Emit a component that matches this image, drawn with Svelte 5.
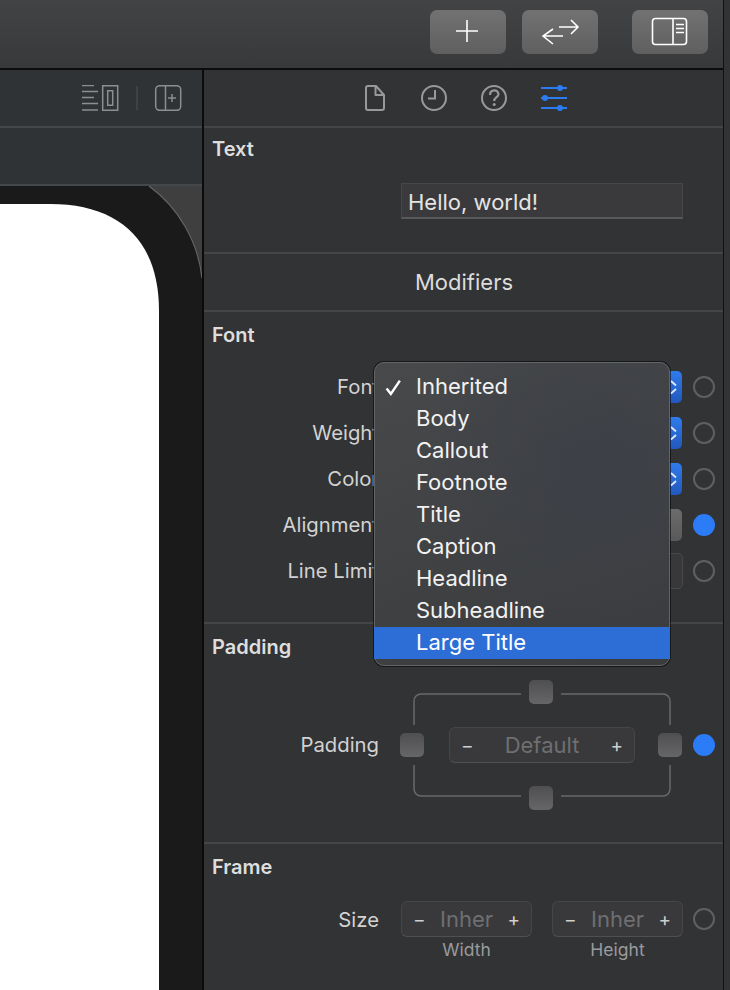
<script>
  const fontRows = [
    { label: 'Font', kind: 'popup' },
    { label: 'Weight', kind: 'popup' },
    { label: 'Color', kind: 'popup' },
    { label: 'Alignment', kind: 'segment', on: true },
    { label: 'Line Limit', kind: 'input' }
  ];
  const menu = ['Inherited', 'Body', 'Callout', 'Footnote', 'Title', 'Caption', 'Headline', 'Subheadline', 'Large Title'];
</script>

<div class="window">
  <header class="toolbar">
    <button class="tool">
      <svg width="76" height="44" viewBox="0 0 76 44"><path d="M37 10v22M26 21h22" fill="none" stroke="#fff" stroke-width="1.6" /></svg>
    </button>
    <button class="tool">
      <svg width="76" height="44" viewBox="0 0 76 44"><path d="M37 17h19M49 10l7 7-7 7M41 26H21M31 19l-10 7 10 8" fill="none" stroke="#fff" stroke-width="1.6" /></svg>
    </button>
    <button class="tool panel">
      <svg width="76" height="44" viewBox="0 0 76 44">
        <rect x="20.5" y="8.5" width="34" height="26" rx="3" fill="none" stroke="#fff" stroke-width="1.6" />
        <path d="M41 8v27M44 14.5h8M44 18.5h8M44 22.5h8" fill="none" stroke="#fff" stroke-width="1.6" />
      </svg>
    </button>
  </header>

  <div class="main">
    <section class="editor">
      <div class="bar bar-icons">
        <svg width="100" height="26" viewBox="0 0 100 26">
          <path d="M0 .5h12M0 6.500h16M0 12.500h12M0 18.500h16M0 25h16" fill="none" stroke="#8c8e90" stroke-width="1.5" />
          <path d="M20.700.7h15v24.600h-15zM25.700 5.700h5v14.600h-5z" fill="none" stroke="#8c8e90" stroke-width="1.5" />
          <path d="M55 1v24" stroke="#45484b" stroke-width="1.5" />
          <rect x="73.700" y=".7" width="25" height="24.600" rx="4" fill="none" stroke="#8c8e90" stroke-width="1.5" />
          <path d="M83.500 1v24M90 9v8M86 13h8" fill="none" stroke="#8c8e90" stroke-width="1.5" />
        </svg>
      </div>
      <div class="bar"></div>
      <svg class="canvas" width="202" height="804" viewBox="0 0 202 804">
        <rect width="202" height="804" fill="#3f3f3f" />
        <path d="M0 0H149A132 132 0 0 1 203 95V804H0Z" fill="#1a1a1a" />
        <path d="M149 0A132 132 0 0 1 202 92" fill="none" stroke="#666" stroke-width="1.2" />
        <path d="M0 18H50C120 18 159 55 159 125V804H0Z" fill="#fff" />
      </svg>
    </section>

    <aside class="inspector">
      <nav class="tabs">
        <svg width="20" height="26" viewBox="0 0 20 26">
          <path d="M3 1H11L19 10V23a2 2 0 0 1-2 2H3a2 2 0 0 1-2-2V3a2 2 0 0 1 2-2ZM10.500 1.500V10H19" fill="none" stroke="#98999b" stroke-width="2" stroke-linejoin="round" />
        </svg>
        <svg class="tab-clock" width="26" height="26" viewBox="0 0 26 26">
          <circle cx="13" cy="13" r="12" fill="none" stroke="#98999b" stroke-width="2" />
          <path d="M14 5v8.500H7" fill="none" stroke="#98999b" stroke-width="2" />
        </svg>
        <svg class="tab-help" width="26" height="26" viewBox="0 0 26 26">
          <circle cx="13" cy="13" r="12" fill="none" stroke="#98999b" stroke-width="2" />
          <path d="M9 10c0-6 8.500-6 8.500-.8 0 3-4.300 3-4.300 6.800" fill="none" stroke="#98999b" stroke-width="2.200" />
          <circle cx="13.200" cy="19.500" r="1.500" fill="#98999b" />
        </svg>
        <svg class="tab-attrs" width="26" height="26" viewBox="0 0 26 26">
          <path d="M0 3h26M0 13h26M0 23h26" stroke="#2b7cf0" stroke-width="2" />
          <circle cx="19" cy="3" r="3" fill="#2b7cf0" />
          <circle cx="4" cy="13" r="3" fill="#2b7cf0" />
          <circle cx="19" cy="23" r="3" fill="#2b7cf0" />
        </svg>
      </nav>

      <section class="group text-group">
        <h2>Text</h2>
        <div class="field">Hello, world!</div>
      </section>

      <section class="group modifiers">Modifiers</section>

      <section class="group font-group">
        <h2>Font</h2>
        {#each fontRows as row}
          <div class="row">
            <span class="label">{row.label}</span>
            <span class="control {row.kind}">
              {#if row.kind === 'popup'}
                <svg width="40" height="32" viewBox="0 0 40 32"><path d="M29 10l5 4.500M34 18l-5 4.500" fill="none" stroke="#dfe8fb" stroke-width="1.800" /></svg>
              {/if}
            </span>
            <span class="dot" class:on={row.on}></span>
          </div>
        {/each}
        <ul class="menu">
          {#each menu as item, i}
            <li class:active={i === menu.length - 1}>
              {#if i === 0}
                <svg class="check" width="17" height="17" viewBox="0 0 16 16"><path d="M1.500 9l4 5L14 1.500" fill="none" stroke="#fff" stroke-width="2.300" /></svg>
              {/if}
              {item}
            </li>
          {/each}
        </ul>
      </section>

      <section class="group padding-group">
        <h2>Padding</h2>
        <div class="row padding-row">
          <span class="label">Padding</span>
          <div class="padding-box">
            <svg class="bracket" width="258" height="104" viewBox="0 0 258 104">
              <path d="M108 1H8A7 7 0 0 0 1 8V32M148 1H250A7 7 0 0 1 257 8V32M1 72V96A7 7 0 0 0 8 103H108M257 72V96A7 7 0 0 1 250 103H148" fill="none" stroke="#68696b" stroke-width="1.500" />
            </svg>
            <span class="knob top"></span>
            <span class="knob left"></span>
            <div class="stepper wide"><i>−</i><b>Default</b><i>+</i></div>
            <span class="knob right"></span>
            <span class="knob bottom"></span>
          </div>
          <span class="dot on"></span>
        </div>
      </section>

      <section class="group frame-group">
        <h2>Frame</h2>
        <div class="row size-row">
          <span class="label">Size</span>
          <div class="sizes">
            <div class="size">
              <div class="stepper"><i>−</i><b>Inher</b><i>+</i></div>
              <small>Width</small>
            </div>
            <div class="size">
              <div class="stepper"><i>−</i><b>Inher</b><i>+</i></div>
              <small>Height</small>
            </div>
          </div>
          <span class="dot"></span>
        </div>
      </section>
    </aside>
  </div>
</div>

<style>
  :global(body) {
    margin: 0;
    background: #323335;
  }
  .window {
    width: 723px;
    height: 990px;
    overflow: hidden;
    border-right: 1px solid #111;
    font-family: Inter, "Liberation Sans", sans-serif;
    font-size: 20.300px;
    color: #dcdcdc;
  }
  .toolbar {
    box-sizing: border-box;
    height: 70px;
    padding: 10px 15px 0 0;
    display: flex;
    justify-content: flex-end;
    gap: 16px;
    background: linear-gradient(#424345, #38393b);
    border-bottom: 2px solid #0c0c0c;
  }
  .tool {
    width: 76px;
    height: 44px;
    padding: 0;
    border: 0;
    border-radius: 7px;
    background: linear-gradient(#727273, #5f5f60);
  }
  .tool svg {
    display: block;
  }
  .tool.panel {
    margin-left: 18px;
  }
  .main {
    display: flex;
    height: 920px;
  }
  .editor {
    width: 202px;
    flex: none;
    border-right: 2px solid #0b0b0b;
    overflow: hidden;
  }
  .bar {
    height: 56px;
    background: #2f3336;
    border-bottom: 2px solid #45484b;
  }
  .bar-icons {
    display: flex;
    justify-content: flex-end;
    align-items: center;
    padding-right: 20px;
  }
  .canvas {
    display: block;
  }
  .inspector {
    flex: 1;
    min-width: 0;
    background: #323335;
  }
  .tabs {
    height: 56px;
    display: flex;
    align-items: center;
    padding-left: 161px;
    border-bottom: 2px solid #444547;
  }
  .tab-clock {
    margin-left: 36px;
  }
  .tab-help {
    margin-left: 34px;
  }
  .tab-attrs {
    margin-left: 34px;
  }
  .group {
    box-sizing: border-box;
    border-bottom: 2px solid #444547;
    position: relative;
  }
  h2 {
    margin: 0;
    height: 46px;
    line-height: 46px;
    padding-left: 8px;
    font-size: 20px;
    font-weight: 600;
    color: #dedede;
  }
  .text-group {
    height: 126px;
  }
  .text-group h2 {
    height: 42px;
    line-height: 42px;
  }
  .field {
    box-sizing: border-box;
    margin: 13px 0 0 197px;
    width: 282px;
    height: 36px;
    line-height: 36px;
    padding-left: 6px;
    background: #3a3a3c;
    border: 1px solid #46474a;
    border-bottom: 2px solid #59595b;
    color: #e4e4e4;
    font-size: 22px;
  }
  .modifiers {
    height: 58px;
    line-height: 57px;
    padding-left: 211px;
    font-size: 22px;
  }
  .font-group {
    height: 312px;
  }
  .row {
    display: grid;
    grid-template-columns: 197px 282px 32px;
    align-items: center;
    height: 46px;
  }
  .font-group h2 {
    margin-bottom: 6px;
  }
  .label {
    padding-right: 22px;
    text-align: right;
    color: #d2d2d2;
    line-height: 46px;
  }
  .control {
    grid-column: 2;
    justify-self: end;
    width: 40px;
    height: 32px;
    margin-right: 1px;
    border-radius: 5px;
  }
  .control svg {
    display: block;
  }
  .popup {
    background: linear-gradient(#2f7bea, #2258bd);
  }
  .segment {
    background: linear-gradient(#6c6c6d, #59595a);
  }
  .input {
    height: 36px;
    margin-right: 0;
    background: #38383a;
    border: 1px solid #48494b;
    box-sizing: border-box;
  }
  .dot {
    box-sizing: border-box;
    width: 22px;
    height: 22px;
    border-radius: 50%;
    border: 2px solid #5f6062;
    margin-left: 10px;
  }
  .dot.on {
    background: #2b7cf6;
    border-color: #2b7cf6;
  }
  .menu {
    position: absolute;
    left: 170px;
    top: 50px;
    box-sizing: border-box;
    width: 296px;
    height: 304px;
    margin: 0;
    padding: 8px 0 7px;
    list-style: none;
    border-radius: 10px;
    border: 1px solid #636466;
    box-shadow: 0 0 0 1px rgba(0, 0, 0, 0.55);
    background: radial-gradient(circle at 75% 35%, #3d4047 0%, rgba(61, 64, 71, 0) 60%),
      linear-gradient(160deg, #47494b, #3a3b3d);
    z-index: 2;
  }
  .menu li {
    position: relative;
    height: 32px;
    line-height: 31px;
    margin: 0 -1px;
    padding-left: 42px;
    font-size: 22px;
    color: #f2f2f2;
  }
  .menu li.active {
    background: #2c6ed6;
    color: #fff;
  }
  .check {
    position: absolute;
    left: 11px;
    top: 8px;
  }
  .padding-group {
    height: 220px;
  }
  .padding-group h2 {
    margin-bottom: 10px;
  }
  .padding-row {
    height: 130px;
  }
  .padding-box {
    position: relative;
    display: flex;
    justify-content: center;
    align-items: center;
    height: 130px;
    width: 282px;
    margin-left: -1px;
  }
  .bracket {
    position: absolute;
    left: 13px;
    top: 13px;
  }
  .knob {
    position: absolute;
    width: 24px;
    height: 24px;
    border-radius: 5px;
    background: linear-gradient(#4f4f51, #666668);
  }
  .knob.top {
    left: 129px;
    top: 0;
  }
  .knob.bottom {
    left: 129px;
    bottom: 0;
  }
  .knob.left {
    left: 0;
    top: 53px;
  }
  .knob.right {
    right: 0;
    top: 53px;
  }
  .stepper {
    box-sizing: border-box;
    display: flex;
    justify-content: space-between;
    align-items: center;
    height: 36px;
    padding: 0 11px;
    background: #39393b;
    border: 1px solid #454648;
    border-bottom-color: #4f5052;
    border-radius: 6px;
    color: #d0d0d0;
  }
  .stepper.wide {
    width: 186px;
    margin-left: 2px;
  }
  .stepper i {
    font-style: normal;
    font-size: 19px;
    color: #cfcfcf;
  }
  .stepper b {
    font-weight: 400;
    font-size: 22px;
    color: #6e6f71;
  }
  .frame-group {
    border-bottom: 0;
  }
  .frame-group h2 {
    margin-bottom: 11px;
  }
  .size-row {
    align-items: start;
    height: auto;
  }
  .size-row .label {
    line-height: 37px;
  }
  .sizes {
    display: flex;
    gap: 20px;
    width: 282px;
  }
  .size {
    width: 131px;
    text-align: center;
  }
  .size small {
    display: block;
    margin-top: 2px;
    font-size: 17.500px;
    color: #9a9b9c;
  }
  .size-row .dot {
    margin-top: 7px;
  }
</style>
